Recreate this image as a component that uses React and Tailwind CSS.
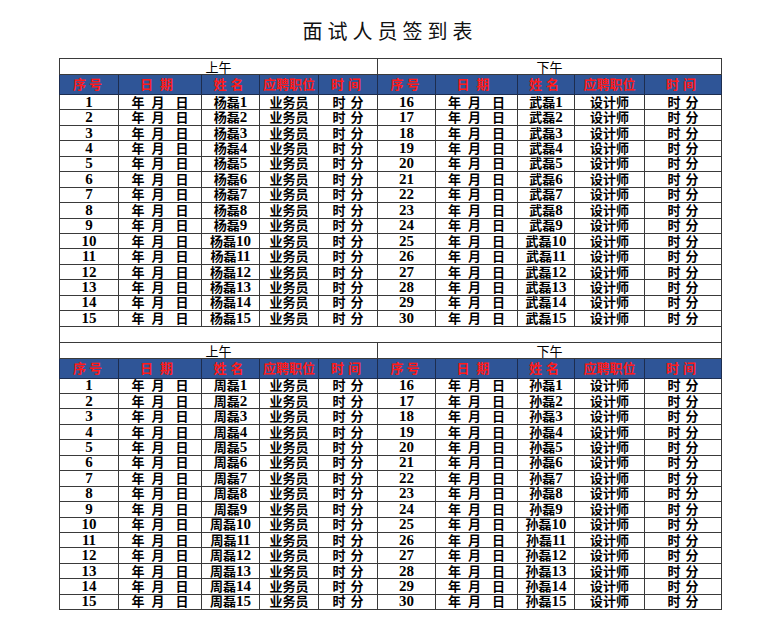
import React from "react";

const COLS = [59, 83, 58, 59, 59, 58, 82, 57, 70, 77];
const HEADS = [
  ["序号", "tracking-[3px]"],
  ["日期", "tracking-[7px]"],
  ["姓名", "tracking-[4px]"],
  ["应聘职位", ""],
  ["时间", "tracking-[4px]"],
];

const font = "font-['Liberation_Serif','Noto_Sans_CJK_SC',serif]";
const line = "border border-[#3a3a3a] p-0";

function DateCell() {
  return (
    <div className="flex justify-center">
      <span>年</span>
      <span className="ml-[7px]">月</span>
      <span className="ml-[11px]">日</span>
    </div>
  );
}

function TimeCell({ gap }) {
  return (
    <div className="flex justify-center">
      <span>时</span>
      <span className={gap}>分</span>
    </div>
  );
}

function Num({ children }) {
  return <span className="text-[15px] leading-[0]">{children}</span>;
}

function Block({ left, right }) {
  const rows = Array.from({ length: 15 }, (_, i) => i + 1);
  return (
    <>
      <tr className="h-[16px]">
        <td colSpan={5} className={`${line} text-center text-[13px] font-normal leading-none font-['Noto_Sans_CJK_SC',sans-serif]`}>上午</td>
        <td colSpan={5} className={`${line} text-center text-[13px] font-normal leading-none font-['Noto_Sans_CJK_SC',sans-serif]`}>下午</td>
      </tr>
      <tr className="h-[20px] bg-[#2f5597]">
        {[...HEADS, ...HEADS].map(([t, tr], i) => (
          <td key={i} className={`border border-[#1d2d4f] p-0 text-center text-[13px] font-bold leading-none text-[#ff1a1a] ${tr}`}>{t}</td>
        ))}
      </tr>
      {rows.map((n) => (
        <tr key={n} className="h-[15.45px]">
          <td className={`${line} text-center`}><Num>{n}</Num></td>
          <td className={line}><DateCell /></td>
          <td className={`${line} text-center`}>{left}磊<Num>{n}</Num></td>
          <td className={`${line} text-center`}>业务员</td>
          <td className={line}><TimeCell gap="ml-[5px]" /></td>
          <td className={`${line} text-center`}><Num>{n + 15}</Num></td>
          <td className={line}><DateCell /></td>
          <td className={`${line} text-center`}>{right}磊<Num>{n}</Num></td>
          <td className={`${line} text-center`}>设计师</td>
          <td className={line}><TimeCell gap="ml-[5px]" /></td>
        </tr>
      ))}
    </>
  );
}

export default function App() {
  return (
    <div className="w-[780px] h-[639px] bg-white pt-[19px]">
      <h1 className="text-center text-[20px] leading-[24px] tracking-[5px] text-[#111] font-['Noto_Sans_CJK_SC',sans-serif] font-normal">
        面试人员签到表
      </h1>
      <table className={`ml-[59px] mt-[15px] table-fixed border-collapse w-[662px] text-[13px] font-bold leading-none text-black ${font}`}>
        <colgroup>
          {COLS.map((w, i) => (
            <col key={i} style={{ width: w }} />
          ))}
        </colgroup>
        <tbody>
          <Block left="杨" right="武" />
          <tr className="h-[16px]">
            <td colSpan={10} className="border-x border-[#3a3a3a] p-0"></td>
          </tr>
          <Block left="周" right="孙" />
        </tbody>
      </table>
    </div>
  );
}
